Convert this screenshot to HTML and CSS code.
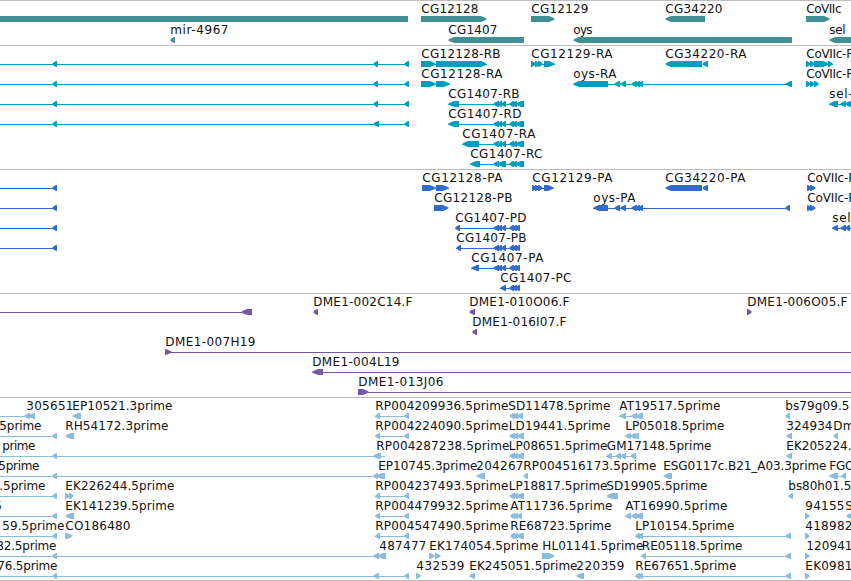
FILE: index.html
```html
<!DOCTYPE html>
<html lang="en">
<head>
<meta charset="utf-8">
<title>Genome browser</title>
<link rel="stylesheet" href="styles.css">
</head>
<body>
<main class="browser" id="browser"></main>
<script src="tracks.js"></script>
</body>
</html>
```
FILE: styles.css
```css
body {
  margin: 0;
  background: #fff;
}

.browser {
  display: flex;
  flex-direction: column;
  width: 851px;
  height: 581px;
  overflow: hidden;
  border-bottom: 1px solid #bebebe;
  box-sizing: border-box;
}

.track {
  flex: none;
  box-sizing: border-box;
  border-top: 1px solid #bebebe;
  overflow: hidden;
}

.track svg {
  display: block;
}

.track text {
  font-family: "DejaVu Sans", sans-serif;
  font-size: 12px;
  fill: #111;
}

.gene { color: #3f8f94; }
.transcript { color: #009dbf; }
.protein { color: #316bcb; }
.clone { color: #7458a6; }
.est { color: #89bcdd; }

.shape { fill: currentColor; }
```
FILE: tracks.js
```js
// Each feature: [row, label, label start, label end, line ("from-to" or ""), exons]
// An exon is "from-to" plus its strand: < reverse, > forward, | no arrow head.
const EX5 = ' 493-499< 497-502< 501-506<';
const END = ' 509-514< 511-517< 515-524<';
const PEND = ' 509-514< 512-517< 515-520<';
const OYS = ' 614-620< 620-626< 631-637< 635-640< 638-643<';
const tracks = [
  { type: 'gene', height: 45, pitch: 21, features: [
    [0, '', 0, 0, '', '0-408|'],
    [0, 'CG12128', 421, 478, '', '421-487>'],
    [0, 'CG12129', 531, 588, '', '531-555>'],
    [0, 'CG34220', 665, 722, '', '665-705<'],
    [0, 'CoVIIc', 806, 841, '', '806-830>'],
    [1, 'mir-4967', 170, 228, '', '170-175<'],
    [1, 'CG1407', 448, 497, '', '448-524<'],
    [1, 'oys', 573, 592, '', '573-792<'],
    [1, 'sel', 829, 845, '', '829-870<']
  ] },
  { type: 'transcript', height: 124, pitch: 20, features: [
    [0, '', 0, 0, '0-409', '52-57< 373-378< 404-409<'],
    [1, '', 0, 0, '0-409', '52-57< 373-378< 404-409<'],
    [2, '', 0, 0, '0-409', '52-57< 373-378< 404-409<'],
    [3, '', 0, 0, '0-409', '52-57< 373-379< 404-409<'],
    [0, 'CG12128-RB', 421, 500, '421-487', '421-436> 436-487>'],
    [0, 'CG12129-RA', 531, 612, '531-555', '531-536> 535-540> 538-543> 544-555>'],
    [0, 'CG34220-RA', 665, 746, '', '665-702< 702-708<'],
    [0, 'CoVIIc-R', 806, 854, '806-833', '806-811> 810-815> 814-829> 828-833>'],
    [1, 'CG12128-RA', 421, 502, '421-450', '421-436> 436-450>'],
    [1, 'oys-RA', 573, 616, '573-792', '573-608<' + OYS + ' 785-792<'],
    [1, 'CoVIIc-R', 806, 854, '', '806-811> 810-815> 814-819>'],
    [2, 'CG1407-RB', 448, 519, '448-524', '448-459<' + EX5 + END],
    [2, 'sel-', 829, 852, '829-851', '829-838< 840-846< 845-851<'],
    [3, 'CG1407-RD', 448, 521, '448-524', '448-459<' + EX5 + END],
    [4, 'CG1407-RA', 462, 535, '462-524', '462-479<' + EX5 + END],
    [5, 'CG1407-RC', 470, 542, '470-524', '470-480< 493-499< 497-506<' + END]
  ] },
  { type: 'protein', height: 124, pitch: 20, features: [
    [0, '', 0, 0, '0-57', '52-57<'],
    [1, '', 0, 0, '0-57', '52-57<'],
    [2, '', 0, 0, '0-57', '52-57<'],
    [3, '', 0, 0, '0-57', '52-57<'],
    [0, 'CG12128-PA', 422, 502, '422-449', '422-436> 436-449>'],
    [0, 'CG12129-PA', 532, 612, '532-554', '532-537> 535-540> 538-543> 544-554>'],
    [0, 'CG34220-PA', 665, 745, '', '665-702< 702-708<'],
    [0, 'CoVIIc-P', 807, 855, '', '807-812> 810-816>'],
    [1, 'CG12128-PB', 434, 512, '', '434-449>'],
    [1, 'oys-PA', 593, 635, '593-790', '593-608<' + OYS + ' 785-790<'],
    [1, 'CoVIIc-P', 807, 855, '', '807-812> 810-816>'],
    [2, 'CG1407-PD', 455, 526, '455-520', '455-460<' + EX5 + PEND],
    [2, 'sel-', 832, 855, '832-851', '832-838< 840-846< 845-850<'],
    [3, 'CG1407-PB', 456, 526, '456-520', '456-461<' + EX5 + PEND],
    [4, 'CG1407-PA', 471, 543, '471-520', '471-479<' + EX5 + PEND],
    [5, 'CG1407-PC', 500, 571, '500-520', '500-506<' + PEND]
  ] },
  { type: 'clone', height: 104, pitch: 20, features: [
    [0, '', 0, 0, '0-252', '241-252<'],
    [0, 'DME1-002C14.F', 313, 412, '', '313-318<'],
    [0, 'DME1-010O06.F', 469, 569, '', '469-475<'],
    [0, 'DME1-006O05.F', 747, 847, '', '747-752>'],
    [1, 'DME1-016I07.F', 472, 566, '', '472-477<'],
    [2, 'DME1-007H19', 165, 255, '165-851', '165-172>'],
    [3, 'DME1-004L19', 312, 399, '312-851', '312-323<'],
    [4, 'DME1-013J06', 358, 443, '358-851', '358-369>']
  ] },
  { type: 'est', height: 183, pitch: 20, features: [
    [0, '305651', 26, 73, '0-35', '24-30< 28-35<'],
    [0, 'EP10521.3prime', 72, 172, '', '72-81<'],
    [0, 'RP004209936.5prime', 375, 508, '375-409', '375-380< 404-409<'],
    [0, 'SD11478.5prime', 508, 610, '', '509-515< 513-518< 516-523<'],
    [0, 'AT19517.5prime', 619, 720, '619-643', '619-626< 631-637< 635-643<'],
    [0, 'bs79g09.5', 785, 849, '', '785-790<'],
    [1, '5prime', -1, 41, '0-57', '52-57<'],
    [1, 'RH54172.3prime', 65, 168, '', '65-74<'],
    [1, 'RP004224090.5prime', 375, 508, '375-409', '375-380< 404-409<'],
    [1, 'LD19441.5prime', 508.5, 610, '', '509-515< 513-518< 516-524<'],
    [1, 'LP05018.5prime', 625, 724, '625-639', '625-631< 630-636< 634-639<'],
    [1, '324934', 786, 832, '', '786-792<'],
    [1, 'Dm', 833, 854, '', '833-838<'],
    [2, 'prime', 2, 35, '0-385', '52-57< 373-379< 376-381<'],
    [2, 'RP004287238.5prime', 376, 509, '', ''],
    [2, 'LP08651.5prime', 508.5, 607, '', '509-515< 513-518< 516-524<'],
    [2, 'GM17148.5prime', 606.5, 711, '606-636', '606-612< 615-621< 620-626< 630-636<'],
    [2, 'EK205224.', 786, 851, '', '786-792<'],
    [3, '5prime', -2, 39, '0-385', '52-57< 373-378< 376-385<'],
    [3, 'EP10745.3prime', 378, 477, '', ''],
    [3, '204267', 476, 523, '', '476-485<'],
    [3, 'RP004516173.5prime', 523, 656, '', '523-528<'],
    [3, 'ESG0117c.B21_A03.3prime', 663, 826, '', '663-672<'],
    [3, 'FGC', 829, 853, '829-846', '829-838< 841-846<'],
    [4, '.5prime', -1, 45, '0-57', '52-57<'],
    [4, 'EK226244.5prime', 65, 174, '', '65-70> 69-74>'],
    [4, 'RP004237493.5prime', 375, 508, '375-409', '375-380< 404-409<'],
    [4, 'LP18817.5prime', 508.5, 607, '', '509-515< 513-518< 516-524<'],
    [4, 'SD19905.5prime', 606, 707, '', '606-618<'],
    [4, 'bs80h01.5', 788, 851, '', '788-793<'],
    [5, '5', -6, 1, '0-57', '52-57<'],
    [5, 'EK141239.5prime', 65, 174, '', '65-74<'],
    [5, 'RP004479932.5prime', 375, 508, '375-409', '375-380< 404-409<'],
    [5, 'AT11736.5prime', 510, 612, '', '510-515< 513-518< 516-522<'],
    [5, 'AT16990.5prime', 625, 727, '625-643', '625-631< 631-637< 635-643<'],
    [5, '94155', 805, 844, '', '805-810>'],
    [5, 'S', 845, 852, '', '846-852<'],
    [6, '59.5prime', 2, 64, '0-57', '52-57<'],
    [6, 'CO186480', 65, 130, '', '65-73>'],
    [6, 'RP004547490.5prime', 375, 508, '375-409', '375-380< 404-409<'],
    [6, 'RE68723.5prime', 510, 611, '', '510-515< 513-518< 516-524<'],
    [6, 'LP10154.5prime', 635, 734, '635-791', '635-640< 638-643< 785-791<'],
    [6, '418982', 805, 852, '', '805-810>'],
    [7, '82.5prime', -4, 56, '0-386', '52-57< 373-379< 377-386<'],
    [7, '487477', 379, 426, '', ''],
    [7, 'EK174054.5prime', 429, 538, '', '429-435> 435-441>'],
    [7, 'HL01141.5prime', 542, 643, '', '542-555>'],
    [7, 'RE05118.5prime', 641.5, 742, '641-791', '641-646< 785-791<'],
    [7, '120941', 806, 852, '', '805-810>'],
    [8, '76.5prime', -3, 57, '0-409', '52-57< 373-379< 404-409<'],
    [8, '432539', 416, 464, '', '416-421>'],
    [8, 'EK245051.5prime', 469, 577, '', '469-475<'],
    [8, '220359', 576, 624, '', '576-584<'],
    [8, 'RE67651.5prime', 635, 736, '635-791', '635-640< 638-643< 785-791<'],
    [8, 'EK0981', 805, 852, '', '805-810>']
  ] }
];

// Arrow heads bulge slightly: each edge bends once between the body and the tip.
function exonPath(spec, y) {
  const [, from, to, strand] = spec.match(/^(\d+)-(\d+)(.)$/);
  const a = +from, b = +to;
  if (strand === '|') return `M${a} ${y}H${b}v6H${a}z`;
  const head = Math.min(6, b - a - 1);
  const tip = strand === '<' ? a : b;
  const tail = strand === '<' ? b : a;
  const dir = strand === '<' ? 1 : -1;
  const base = tip + dir * head;
  const bend = tip + dir * head * 0.4;
  return `M${tail} ${y}H${base}L${bend} ${y + 1.5}L${tip} ${y + 3}` +
    `L${bend} ${y + 4.5}L${base} ${y + 6}H${tail}z`;
}

document.getElementById('browser').innerHTML = tracks.map(t => {
  let shapes = '', labels = '';
  for (const [row, label, start, end, line, exons] of t.features) {
    const y = row * t.pitch + 15;
    if (line) {
      const [a, b] = line.split('-').map(Number);
      shapes += `<rect class="shape" x="${a}" y="${y + 3}" width="${b - a}" height="1"/>`;
    }
    for (const e of exons.trim().split(' ').filter(Boolean)) {
      shapes += `<path class="shape" d="${exonPath(e, y)}"/>`;
    }
    if (label) {
      labels += `<text x="${start + 0.3}" y="${y - 3}" textLength="${end - start + 0.2}">${label}</text>`;
    }
  }
  return `<section class="track ${t.type}" style="height:${t.height}px">` +
    `<svg width="851" height="${t.height - 1}">${shapes}${labels}</svg></section>`;
}).join('');
```
